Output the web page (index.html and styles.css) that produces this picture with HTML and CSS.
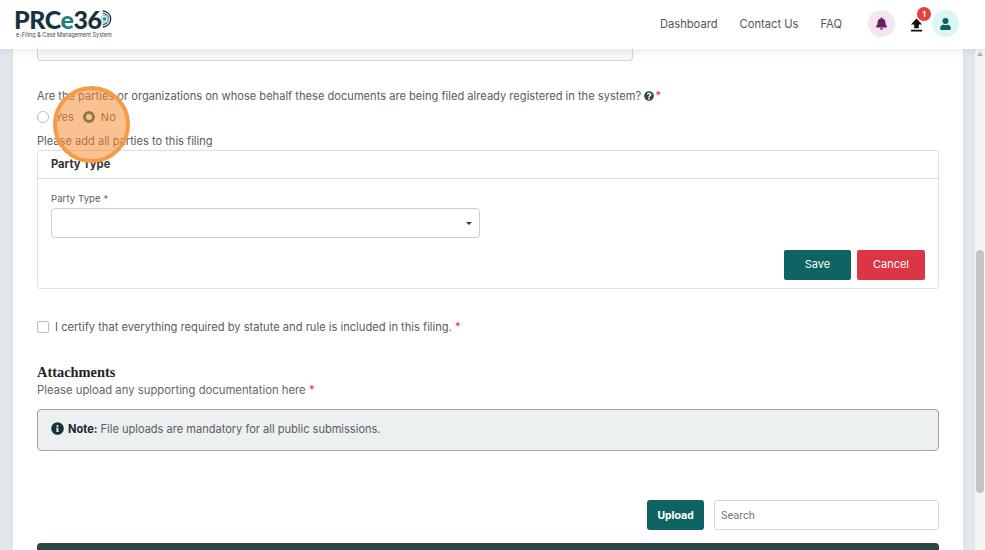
FILE: index.html
```html
<!DOCTYPE html>
<html lang="en">
<head>
<meta charset="utf-8">
<title>PRCe360</title>
<link rel="stylesheet" href="styles.css">
</head>
<body>
<header class="topbar">
  <div class="logo">
    <div class="logo-mark"><span class="logo-prc">PRC</span><span class="logo-e">e</span><span class="logo-prc">36</span>
      <svg class="logo-ring" viewBox="0 0 16 20" width="16" height="20"><path d="M3 1.200A8.800 8.800 0 0 1 3 18.800" fill="none" stroke="#17323a" stroke-width="1.500"/><path d="M3 3.800A6.200 6.200 0 0 1 3 16.200" fill="none" stroke="#3d5a60" stroke-width="1.300"/><circle cx="5" cy="10" r="4" fill="none" stroke="#9cc4c2" stroke-width="1.200"/><circle cx="5" cy="10" r="2.200" fill="#2a9d97"/></svg>
    </div>
    <div class="logo-sub">e-Filing &amp; Case Management System</div>
  </div>
  <nav class="nav">
    <a class="nav-link">Dashboard</a>
    <a class="nav-link">Contact Us</a>
    <a class="nav-link">FAQ</a>
  </nav>
  <div class="actions">
    <span class="round round-bell">
      <svg viewBox="0 0 448 512" width="11" height="13"><path fill="#6a1f63" d="M224 512c35 0 64-29 64-64H160c0 35 29 64 64 64zm215-150c-19-21-55-52-55-154 0-78-54-140-128-155V32a32 32 0 1 0-64 0v21C118 68 64 130 64 208c0 102-36 133-55 154-6 6-9 14-9 22 0 16 13 32 32 32h384c19 0 32-16 32-32 0-8-3-16-9-22z"/></svg>
    </span>
    <span class="upload-icon">
      <svg viewBox="0 0 14 14" width="13" height="14"><path fill="#111" d="M7 0 13 6.500H9.500V10.500H4.500V6.500H1ZM1 12H13V14H1Z"/></svg>
      <span class="badge">1</span>
    </span>
    <span class="round round-user">
      <svg viewBox="0 0 448 512" width="11" height="12"><path fill="#0d6460" d="M224 256a128 128 0 1 0 0-256 128 128 0 0 0 0 256zm90 32h-17a174 174 0 0 1-146 0h-17C60 288 0 348 0 422v42c0 27 21 48 48 48h352c27 0 48-21 48-48v-42c0-74-60-134-134-134z"/></svg>
    </span>
  </div>
</header>

<div class="viewport">
  <div class="gutter"></div>
  <main class="sheet">
    <div class="stub-input"></div>
    <p class="question">Are the parties or organizations on whose behalf these documents are being filed already registered in the system?
      <svg class="help" viewBox="0 0 512 512" width="10" height="10"><path fill="#33474a" d="M504 256a248 248 0 1 1-496 0 248 248 0 0 1 496 0zM263 90c-54 0-89 23-116 64-4 5-3 12 3 16l35 26c5 4 13 3 17-2 18-23 30-36 58-36 21 0 46 13 46 33 0 15-12 23-33 34-23 14-55 31-55 73v8c0 7 5 12 12 12h56c7 0 12-5 12-12v-5c0-29 85-30 85-109 0-59-61-102-120-102zm-7 254a47 47 0 1 0 0 94 47 47 0 0 0 0-94z"/></svg>
      <span class="req req-tight">*</span></p>
    <div class="radios">
      <label class="radio"><span class="radio-dot"></span>Yes</label>
      <label class="radio"><span class="radio-dot radio-on"></span>No</label>
    </div>
    <p class="hint">Please add all parties to this filing</p>
    <section class="card">
      <h3 class="card-head">Party Type</h3>
      <div class="card-body">
        <div class="field-label">Party Type <span class="req">*</span></div>
        <div class="select"><span class="caret"></span></div>
        <div class="card-actions">
          <button class="btn btn-save">Save</button>
          <button class="btn btn-cancel">Cancel</button>
        </div>
      </div>
    </section>
    <label class="certify"><span class="checkbox"></span>I certify that everything required by statute and rule is included in this filing. <span class="req">*</span></label>
    <h2 class="attach-title">Attachments</h2>
    <p class="attach-sub">Please upload any supporting documentation here <span class="req">*</span></p>
    <div class="note">
      <svg viewBox="0 0 512 512" width="13" height="13"><path fill="#17323a" d="M256 8a248 248 0 1 0 0 496 248 248 0 0 0 0-496zm0 110a42 42 0 1 1 0 84 42 42 0 0 1 0-84zm56 254c0 7-5 12-12 12h-88c-7 0-12-5-12-12v-24c0-7 5-12 12-12h12v-64h-12c-7 0-12-5-12-12v-24c0-7 5-12 12-12h64c7 0 12 5 12 12v100h12c7 0 12 5 12 12z"/></svg>
      <span><b class="note-b">Note:</b> File uploads are mandatory for all public submissions.</span>
    </div>
    <div class="toolbar">
      <button class="btn-upload">Upload</button>
      <div class="search">Search</div>
    </div>
    <div class="table-head"></div>
  </main>
  <div class="gutter gutter-right"></div>
  <div class="scrollbar">
    <span class="arrow"></span>
    <span class="thumb"></span>
  </div>
</div>
<div class="click-marker"></div>
</body>
</html>
```
FILE: styles.css
```css
* { box-sizing: border-box; }
html, body { margin: 0; height: 100%; overflow: hidden; }
body {
  width: 985px; height: 550px;
  font-family: "Inter", "Noto Sans", sans-serif;
  font-size: 11px;
  color: #5c5c5c;
  display: flex; flex-direction: column;
  background: #fff;
}
.topbar {
  height: 49px; flex: none;
  display: flex; align-items: center;
  padding: 0 26px 2px 14px;
  background: #fff;
  box-shadow: 0 2px 8px rgba(0,0,0,.09);
  position: relative; z-index: 2;
}
.logo { display: flex; flex-direction: column; width: 100px; }
.logo-mark { display: flex; align-items: center; height: 21px; font-family: "Lato", sans-serif; font-weight: 900; font-size: 25px; letter-spacing: -.5px; color: #17323a; line-height: 21px; }
.logo-e { color: #1f7f7c; }
.logo-ring { margin-left: -2px; }
.logo-sub { font-size: 5.500px; color: #3d4a4d; line-height: 7px; white-space: nowrap; margin: 2px 0 0 2px; }
.nav { margin-left: auto; display: flex; gap: 22px; margin-right: 26px; }
.nav-link { font-size: 11.200px; color: #555; }
.actions { display: flex; align-items: center; }
.round { width: 27px; height: 27px; border-radius: 50%; display: flex; align-items: center; justify-content: center; }
.round-bell { background: #f3e6f1; }
.round-user { background: #def5f5; }
.upload-icon { width: 37px; height: 27px; display: flex; align-items: center; justify-content: center; position: relative; padding-top: 2px; padding-left: 5px; }
.badge { position: absolute; top: -3px; right: 1px; width: 14px; height: 14px; border-radius: 50%; background: #e8413a; color: #fff; font-size: 8px; font-weight: 700; display: flex; align-items: center; justify-content: center; }
.viewport { flex: 1; display: flex; min-height: 0; background: #e2e7ee; }
.gutter { width: 13px; flex: none; }
.gutter-right { width: 12px; }
.sheet { width: 950px; flex: none; background: #fff; padding: 0 24px; overflow: hidden; }
.stub-input { height: 12px; width: 596px; border: 1px solid #d5d5d5; border-top: 0; border-radius: 0 0 4px 4px; background: #f7f8f8; }
.question { margin: 28px 0 0; line-height: 14px; height: 14px; white-space: nowrap; font-size: 11.120px; }
.help { vertical-align: -1px; }
.req { color: #dc3545; }
.req-tight { margin-left: -2px; }
.radios { display: flex; align-items: center; gap: 9px; height: 14px; margin-top: 7px; font-size: 11px; }
.radio { display: flex; align-items: center; gap: 6px; }
.radio-dot { width: 12px; height: 12px; border-radius: 50%; border: 1px solid #bbb; background: #fff; }
.radio-on { border: 3.500px solid #0d6460; }
.hint { margin: 10px 0 0; line-height: 14px; font-size: 11.100px; }
.card { margin-top: 2px; height: 139px; border: 1px solid #dedede; border-radius: 3px; }
.card-head { margin: 0; height: 28px; padding: 0 13px; line-height: 26px; font-size: 11.200px; font-weight: 700; color: #333; border-bottom: 1px solid #dedede; }
.card-body { padding: 14px 13px 0; }
.field-label { font-size: 9.500px; line-height: 12px; height: 15px; letter-spacing: .1px; }
.select { width: 429px; height: 30px; border: 1px solid #ccc; border-radius: 4px; position: relative; }
.caret { position: absolute; right: 7px; top: 13px; border: 3px solid transparent; border-top-color: #333; border-bottom: 0; }
.card-actions { display: flex; justify-content: flex-end; gap: 6px; margin-top: 12px; }
.btn { height: 30px; border: 0; border-radius: 2px; color: #fff; font: 11px "Inter", sans-serif; padding: 0 0 2px; }
.btn-save { width: 67px; background: #0d6460; }
.btn-cancel { width: 68px; background: #dc3545; }
.certify { display: flex; align-items: center; gap: 6px; margin-top: 31px; height: 14px; font-size: 11.150px; }
.checkbox { width: 12px; height: 12px; border: 1px solid #bbb; border-radius: 2px; }
.certify .req { margin-left: -3px; }
.attach-title { margin: 29px 0 0; font: 700 14.400px/18px "Liberation Serif", serif; color: #222; }
.attach-sub { margin: 2px 0 0; line-height: 14px; font-size: 11.300px; color: #666; }
.note { margin-top: 12px; height: 42px; border: 1px solid #9aa5a5; border-radius: 4px; background: #ecf0f1; display: flex; align-items: center; gap: 4px; padding: 0 0 3px 13px; font-size: 11.050px; }
.note-b { color: #223; font-weight: 700; }
.toolbar { display: flex; justify-content: flex-end; align-items: center; gap: 10px; margin-top: 49px; }
.btn-upload { width: 57px; height: 30px; border: 0; border-radius: 3px; background: #0d6460; color: #fff; font: 700 11.500px "Roboto", sans-serif; }
.search { width: 225px; height: 30px; border: 1px solid #d8d8d8; border-radius: 3px; padding: 1px 6px 0; font: 11px/28px "Roboto", sans-serif; color: #777; }
.table-head { margin-top: 13px; height: 40px; background: #2d4344; border-radius: 4px 4px 0 0; }
.scrollbar { width: 10px; flex: none; background: #f5f5f5; display: flex; flex-direction: column; align-items: center; position: relative; }
.arrow { margin-top: 3px; border: 3px solid transparent; border-bottom: 4px solid #b0b0b0; border-top: 0; }
.thumb { position: absolute; top: 201px; left: 1px; width: 8px; height: 243px; background: #c4c4c4; border-radius: 4px; }
.click-marker { position: absolute; left: 53px; top: 86px; width: 77px; height: 77px; border-radius: 50%; border: 4px solid #f79a45; background: rgba(245,140,50,.53); z-index: 3; }
```
